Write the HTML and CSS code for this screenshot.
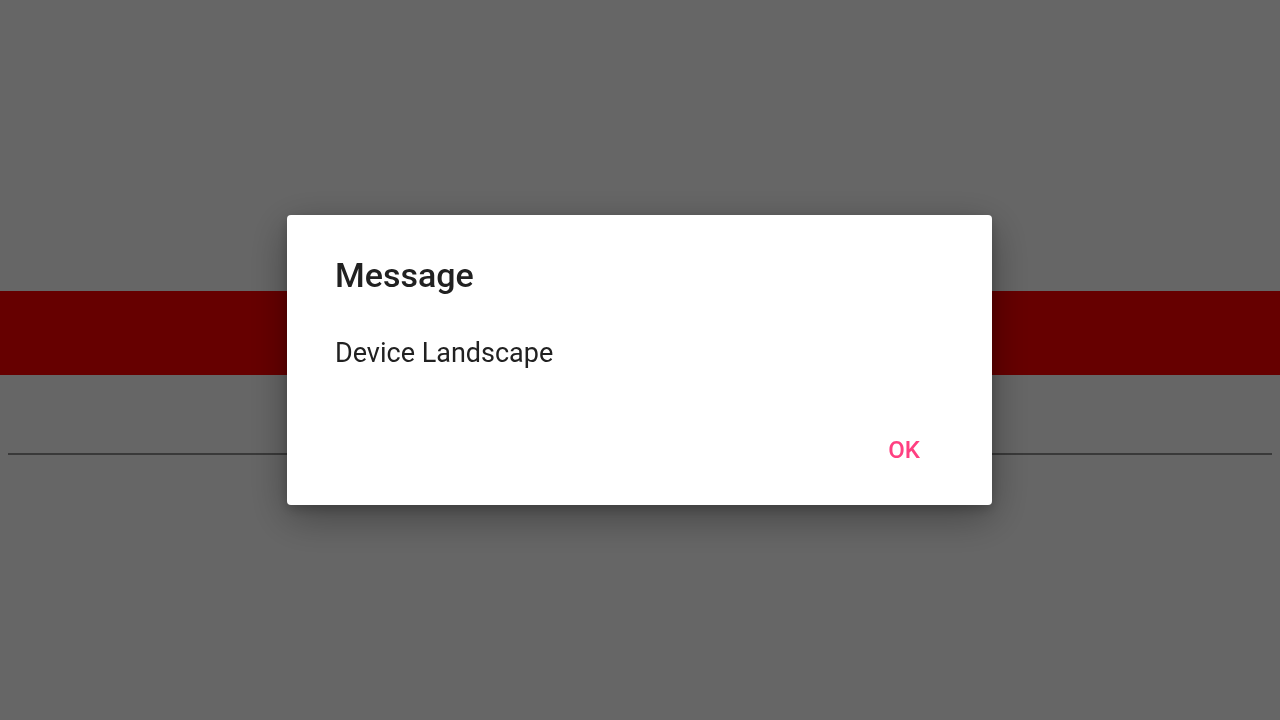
FILE: index.html
```html
<!DOCTYPE html>
<html>
<head>
<meta charset="utf-8">
<link rel="stylesheet" href="styles.css">
</head>
<body>
<div class="page">
  <div class="top"></div>
  <div class="bar"></div>
  <div class="field"><div class="line"></div></div>
</div>
<div class="overlay">
  <div class="dialog">
    <h1 class="title">Message</h1>
    <p class="msg">Device Landscape</p>
    <div class="actions"><button class="ok">OK</button></div>
  </div>
</div>
</body>
</html>
```
FILE: styles.css
```css
html, body {
  margin: 0;
  padding: 0;
  width: 1280px;
  height: 720px;
  overflow: hidden;
  font-family: Roboto, "Noto Sans", sans-serif;
}
.page {
  width: 1280px;
  height: 720px;
  background: #ffffff;
  display: flex;
  flex-direction: column;
}
.top { height: 291px; }
.bar { height: 84px; background: #ff0000; }
.field { padding: 78px 8px 0; }
.line { height: 2px; background: #909090; }
.overlay {
  position: fixed;
  inset: 0;
  background: rgba(0, 0, 0, 0.6);
  display: flex;
  align-items: flex-start;
  justify-content: center;
}
.dialog {
  margin-top: 215px;
  margin-left: -1px;
  width: 705px;
  height: 290px;
  box-sizing: border-box;
  background: #fff;
  border-radius: 4px;
  box-shadow: 0 12px 40px rgba(0,0,0,0.35), 0 4px 12px rgba(0,0,0,0.2);
  padding: 38px 48px 0 48px;
  display: flex;
  flex-direction: column;
}
.title {
  margin: 0;
  font-size: 34px;
  font-weight: 500;
  color: #212121;
  line-height: 44px;
}
.msg {
  margin: 39px 0 0;
  font-size: 27px;
  font-weight: 400;
  color: #212121;
  line-height: 34px;
}
.actions {
  display: flex;
  justify-content: flex-end;
  margin-top: 64px;
}
.ok {
  border: none;
  background: none;
  padding: 0;
  margin-right: 24px;
  font-family: Roboto, "Noto Sans", sans-serif;
  font-size: 24px;
  font-weight: 500;
  color: #ff4081;
  line-height: 32px;
}
```
